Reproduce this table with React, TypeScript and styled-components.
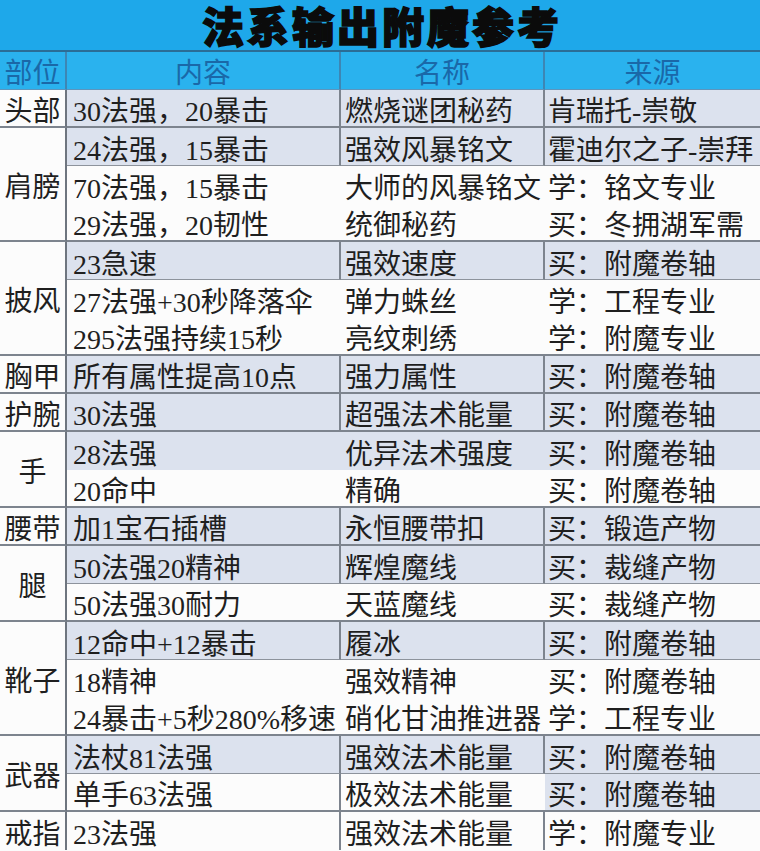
import React from "react";
import styled, { createGlobalStyle, css } from "styled-components";

const Global = createGlobalStyle`
  html, body { margin: 0; padding: 0; background: #ffffff; }
  body { width: 760px; height: 851px; overflow: hidden; }
`;

const Page = styled.div`
  width: 760px;
  height: 851px;
  overflow: hidden;
  background: #fbfbfb;
  font-family: "Liberation Serif", "Noto Sans CJK SC", serif;
  color: #1f1f1f;
`;

const TitleBar = styled.div`
  height: 50px;
  background: #1ea8ea;
  border-bottom: 2px solid #2a6d96;
  display: flex;
  align-items: center;
  justify-content: center;
`;

const Title = styled.h1`
  margin: 0;
  padding: 0 0 0 4px;
  font-family: "Noto Sans CJK SC", sans-serif;
  font-weight: 900;
  font-size: 42px;
  line-height: 1.2;
  color: #0b0b0b;
  letter-spacing: 3px;
  -webkit-text-stroke: 1.5px #0b0b0b;
`;

const Grid = styled.div`
  display: grid;
  grid-template-columns: 67px 274px 204px 1fr;
  grid-auto-rows: 38px;
`;

const Head = styled.div<{ $last?: boolean }>`
  box-sizing: border-box;
  background: #2ab2ee;
  color: #1a68a8;
  font-size: 28px;
  display: flex;
  align-items: center;
  justify-content: center;
  border-bottom: 1px solid #5d95bd;
  ${(p) => !p.$last && css`border-right: 2px solid #3d86b4;`}
`;

type Rule = "group" | "thin" | "none";

const Part = styled.div<{ $span: number; $rule: Rule }>`
  grid-column: 1;
  grid-row: span ${(p) => p.$span};
  box-sizing: border-box;
  background: #fcfcfc;
  border-right: 2px solid #6e757f;
  ${(p) => p.$rule === "group" && css`border-bottom: 2px solid #7d848e;`}
  display: flex;
  align-items: center;
  justify-content: center;
  padding-top: 2px;
  font-size: 28px;
  white-space: nowrap;
`;

const Cell = styled.div<{ $shade: boolean; $divider: boolean; $rule: Rule; $pad: number }>`
  box-sizing: border-box;
  background: ${(p) => (p.$shade ? "#dce2ee" : "#fcfcfc")};
  ${(p) => p.$divider && css`border-right: 2px solid #7d848e;`}
  ${(p) => p.$rule === "group" && css`border-bottom: 2px solid #7d848e;`}
  ${(p) => p.$rule === "thin" && css`border-bottom: 1px solid #8d939c;`}
  display: flex;
  align-items: center;
  padding-left: ${(p) => p.$pad}px;
  padding-top: 2px;
  font-size: 28px;
  white-space: nowrap;
  overflow: hidden;
`;

type Row = {
  c: string;
  n: string;
  s: string;
  shade: "all" | "none" | "src";
  div: 0 | 1 | 2;
};

type Group = { part: string; rows: Row[] };

const groups: Group[] = [
  { part: "头部", rows: [{ c: "30法强，20暴击", n: "燃烧谜团秘药", s: "肯瑞托-崇敬", shade: "all", div: 2 }] },
  {
    part: "肩膀",
    rows: [
      { c: "24法强，15暴击", n: "强效风暴铭文", s: "霍迪尔之子-崇拜", shade: "all", div: 2 },
      { c: "70法强，15暴击", n: "大师的风暴铭文", s: "学：铭文专业", shade: "none", div: 0 },
      { c: "29法强，20韧性", n: "统御秘药", s: "买：冬拥湖军需", shade: "none", div: 0 },
    ],
  },
  {
    part: "披风",
    rows: [
      { c: "23急速", n: "强效速度", s: "买：附魔卷轴", shade: "all", div: 2 },
      { c: "27法强+30秒降落伞", n: "弹力蛛丝", s: "学：工程专业", shade: "none", div: 0 },
      { c: "295法强持续15秒", n: "亮纹刺绣", s: "学：附魔专业", shade: "none", div: 0 },
    ],
  },
  { part: "胸甲", rows: [{ c: "所有属性提高10点", n: "强力属性", s: "买：附魔卷轴", shade: "all", div: 2 }] },
  { part: "护腕", rows: [{ c: "30法强", n: "超强法术能量", s: "买：附魔卷轴", shade: "all", div: 2 }] },
  {
    part: "手",
    rows: [
      { c: "28法强", n: "优异法术强度", s: "买：附魔卷轴", shade: "all", div: 0 },
      { c: "20命中", n: "精确", s: "买：附魔卷轴", shade: "none", div: 0 },
    ],
  },
  { part: "腰带", rows: [{ c: "加1宝石插槽", n: "永恒腰带扣", s: "买：锻造产物", shade: "all", div: 2 }] },
  {
    part: "腿",
    rows: [
      { c: "50法强20精神", n: "辉煌魔线", s: "买：裁缝产物", shade: "all", div: 2 },
      { c: "50法强30耐力", n: "天蓝魔线", s: "买：裁缝产物", shade: "none", div: 0 },
    ],
  },
  {
    part: "靴子",
    rows: [
      { c: "12命中+12暴击", n: "履冰", s: "买：附魔卷轴", shade: "all", div: 2 },
      { c: "18精神", n: "强效精神", s: "买：附魔卷轴", shade: "none", div: 0 },
      { c: "24暴击+5秒280%移速", n: "硝化甘油推进器", s: "学：工程专业", shade: "none", div: 0 },
    ],
  },
  {
    part: "武器",
    rows: [
      { c: "法杖81法强", n: "强效法术能量", s: "买：附魔卷轴", shade: "all", div: 2 },
      { c: "单手63法强", n: "极效法术能量", s: "买：附魔卷轴", shade: "src", div: 1 },
    ],
  },
  { part: "戒指", rows: [{ c: "23法强", n: "强效法术能量", s: "学：附魔专业", shade: "none", div: 2 }] },
];

export default function App() {
  return (
    <Page>
      <Global />
      <TitleBar>
        <Title>法系输出附魔参考</Title>
      </TitleBar>
      <Grid>
        <Head>部位</Head>
        <Head>内容</Head>
        <Head>名称</Head>
        <Head $last>来源</Head>
        {groups.map((g, gi) => {
          const lastGroup = gi === groups.length - 1;
          return (
            <React.Fragment key={g.part}>
              <Part $span={g.rows.length} $rule={lastGroup ? "none" : "group"}>
                {g.part}
              </Part>
              {g.rows.map((r, ri) => {
                const isLast = ri === g.rows.length - 1;
                const rule: Rule = isLast
                  ? lastGroup
                    ? "none"
                    : "group"
                  : r.shade === "all" && r.div === 2
                  ? "thin"
                  : "none";
                const shaded = r.shade === "all";
                return (
                  <React.Fragment key={r.c}>
                    <Cell $shade={shaded} $divider={r.div >= 1} $rule={rule} $pad={6}>
                      {r.c}
                    </Cell>
                    <Cell $shade={shaded} $divider={r.div >= 2} $rule={rule} $pad={4}>
                      {r.n}
                    </Cell>
                    <Cell $shade={shaded || r.shade === "src"} $divider={false} $rule={rule} $pad={3}>
                      {r.s}
                    </Cell>
                  </React.Fragment>
                );
              })}
            </React.Fragment>
          );
        })}
      </Grid>
    </Page>
  );
}
